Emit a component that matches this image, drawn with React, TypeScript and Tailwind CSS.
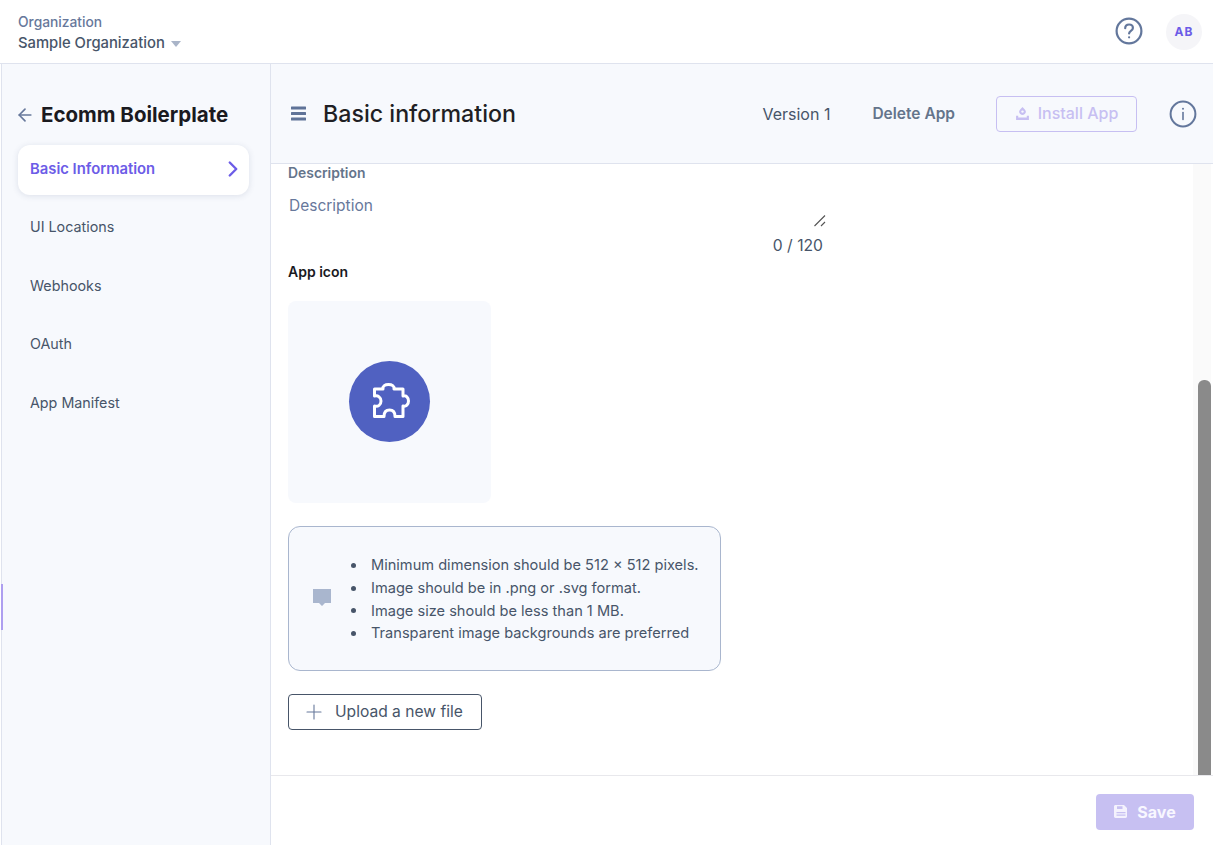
import { ArrowLeft, ChevronRight, Plus } from "lucide-react";

const navItems = ["UI Locations", "Webhooks", "OAuth", "App Manifest"];

const hints = [
  "Minimum dimension should be 512 × 512 pixels.",
  "Image should be in .png or .svg format.",
  "Image size should be less than 1 MB.",
  "Transparent image backgrounds are preferred",
];

const HelpIcon = () => (
  <svg width="28" height="28" viewBox="0 0 28 28" fill="none" stroke="#63779c" strokeWidth="2.2">
    <circle cx="14" cy="14" r="12.4" />
    <path d="M10.2 11.2c0-2.2 1.7-3.7 3.9-3.7 2.2 0 3.8 1.4 3.8 3.4 0 3-3.8 3-3.8 5.6" strokeLinecap="round" />
    <circle cx="14.1" cy="20.3" r="1.1" fill="#63779c" stroke="none" />
  </svg>
);

const InfoIcon = () => (
  <svg width="28" height="28" viewBox="0 0 28 28" fill="none" stroke="#63779c" strokeWidth="2">
    <circle cx="14" cy="14" r="12.4" />
    <path d="M14 12.5v7" strokeWidth="1.6" strokeLinecap="round" />
    <circle cx="14" cy="8.8" r="1" fill="#63779c" stroke="none" />
  </svg>
);

const InstallIcon = () => (
  <svg width="15" height="15" viewBox="0 0 14 14" fill="#c7bff2">
    <path d="M7 1 9.2 3.2a3 3 0 1 1-4.4 0z" />
    <circle cx="7" cy="5.2" r="1.1" fill="#f7f9fd" />
    <path d="M1 9h2v1.8h8V9h2v4H1z" />
  </svg>
);

const SaveIcon = () => (
  <svg width="14" height="15" viewBox="0 0 14 15" fill="#f4f2fd" fillRule="evenodd">
    <path d="M1.500 1H10l3 3v8.600c0 .8-.6 1.400-1.400 1.400H1.500C.7 14 0 13.400 0 12.600V2.400C0 1.600.7 1 1.500 1zM3 2.200V5h5.500V2.200zM2.500 8v1.200h9V8zm0 2.500v1.200h9v-1.200z" />
  </svg>
);

const CommentIcon = () => (
  <svg width="18" height="18" viewBox="0 0 18 18" fill="#a9b6ce">
    <path d="M0 0h18v14h-6l-3 3-3-3H0z" />
  </svg>
);

const MenuIcon = () => (
  <svg width="15" height="15" viewBox="0 0 15 15" fill="#5f7398">
    <rect x="0" y="0.500" width="15" height="3" rx="0.500" />
    <rect x="0" y="6" width="15" height="3" rx="0.500" />
    <rect x="0" y="11.500" width="15" height="3" rx="0.500" />
  </svg>
);

const PuzzleIcon = () => (
  <svg width="37" height="35" viewBox="0 0 37 35" fill="none" stroke="white" strokeWidth="3" strokeLinejoin="round">
    <path d="M1.500 6H10C9.500 3 12 1.500 15.500 1.500C19 1.500 21.500 3 21 6H30V13C33 12 35.500 14.500 35.500 18C35.500 21.500 33 24 30 23V33.500H22C22 29 19.500 27 16.500 27C13 27 11 29 11 33.500H1.500V23C5 24 8 22 8 18C8 14.500 5 12 1.500 13Z" />
  </svg>
);

export default function App() {
  return (
    <div className="h-[845px] w-[1213px] overflow-hidden bg-white font-['Inter',sans-serif]">
      <header className="flex h-16 items-center justify-between border-b border-[#dfe3ee] pl-[18px] pr-[11px]">
        <div className="pt-[3px]">
          <div className="text-[13.800px] font-medium leading-[20px] text-[#67789b]">Organization</div>
          <div className="flex items-center gap-[6px] text-[14.800px] font-medium leading-[22px] text-[#475569]">
            Sample Organization
            <span className="mt-[2px] h-0 w-0 border-x-[5px] border-t-[6px] border-x-transparent border-t-[#a9b4c8]" />
          </div>
        </div>
        <div className="flex items-center gap-[23px]">
          <div className="mb-[2px]">
            <HelpIcon />
          </div>
          <div className="flex h-9 w-9 items-center justify-center rounded-full bg-[#f5f5f8] text-[12px] font-bold tracking-[1px] text-[#6c5ce7]">
            AB
          </div>
        </div>
      </header>

      <div className="flex h-[781px]">
        <aside className="relative ml-[1px] w-[270px] shrink-0 border-x border-[#dfe3ee] bg-[#f7f9fd] pl-[16px] pr-[21px] pt-[37px]">
          <div className="absolute left-[-1px] top-[520px] h-[46px] w-[2px] bg-[#ae9ff0]" />
          <div className="flex h-7 items-center gap-[6px]">
            <ArrowLeft className="-ml-[3px]" size={20} color="#67789b" strokeWidth={2} />
            <h1 className="text-[20.500px] font-bold text-[#1a1a1f]">Ecomm Boilerplate</h1>
          </div>
          <div className="mt-[16px] flex h-[50px] items-center justify-between rounded-xl bg-white pb-[2px] pl-[12px] pr-[3px] shadow-[0_1px_6px_rgba(60,70,110,0.14)]">
            <span className="text-[14.800px] font-semibold text-[#6c5ce7]">Basic Information</span>
            <ChevronRight size={26} color="#6c5ce7" strokeWidth={2.200} />
          </div>
          <nav className="mt-[2.500px] flex flex-col">
            {navItems.map((item) => (
              <div key={item} className="flex h-[58.500px] items-center pl-[12px] text-[14.300px] text-[#475569]">
                {item}
              </div>
            ))}
          </nav>
        </aside>

        <main className="flex min-w-0 flex-1 flex-col">
          <div className="flex h-[100px] shrink-0 items-center border-b border-[#dfe3ee] bg-[#f7f9fd] pl-[20px] pr-[16px]">
            <MenuIcon />
            <h2 className="ml-[17px] pt-[2px] text-[23.200px] font-medium text-[#1f1f24]">Basic information</h2>
            <span className="ml-auto text-base text-[#475569]">Version 1</span>
            <span className="ml-[42px] text-[15.500px] font-semibold text-[#64748b]">Delete App</span>
            <div className="ml-[41px] flex h-9 w-[141px] items-center justify-center gap-[8px] rounded border border-[#c7bff2] pb-[1px] text-base font-medium text-[#c7bff2]">
              <InstallIcon />
              Install App
            </div>
            <div className="ml-[32px]">
              <InfoIcon />
            </div>
          </div>

          <div className="relative min-h-0 flex-1 overflow-hidden pl-[17px]">
            <div className="absolute bottom-0 right-[2px] top-0 w-[18px] bg-[#fafafa]" />
            <div className="absolute bottom-0 right-[2px] top-[216px] w-[13px] rounded-t-md bg-[#8a8a8a]" />

            <div className="text-[13.900px] font-semibold leading-[18px] text-[#64748b]">Description</div>
            <div className="relative h-[51px] w-[538px] pl-[1px] pt-[14px] text-[15.500px] leading-[20px] text-[#67789b]">
              Description
              <svg className="absolute bottom-[6px] right-[0px]" width="12" height="12" viewBox="0 0 12 12" stroke="#555" strokeWidth="1.100">
                <path d="M0.500 11 11 0.500M7 11 11 7" />
              </svg>
            </div>
            <div className="mt-[2px] w-[535px] text-right text-[15.700px] leading-[22px] text-[#475569]">0 / 120</div>
            <div className="mt-[6px] text-[14px] font-semibold leading-[18px] text-[#1a1a1f]">App icon</div>
            <div className="mt-[20px] flex h-[202px] w-[203px] items-center justify-center rounded-lg bg-[#f7f9fd]">
              <div className="mb-[2px] flex h-[81px] w-[81px] items-center justify-center rounded-full bg-[#5061c1]">
                <div className="mb-[2px] ml-[4px]">
                  <PuzzleIcon />
                </div>
              </div>
            </div>
            <div className="mt-[23px] flex h-[145px] w-[433px] items-center rounded-xl border border-[#a9b6ce] bg-[#f7f9fd] pl-[24px]">
              <div className="mb-[2px]">
                <CommentIcon />
              </div>
              <ul className="ml-[20px] mt-[2px] text-[14.600px] leading-[22.700px] text-[#475569]">
                {hints.map((hint) => (
                  <li key={hint} className="flex items-center gap-[15px]">
                    <span className="h-[5px] w-[5px] rounded-full bg-[#475569]" />
                    {hint}
                  </li>
                ))}
              </ul>
            </div>
            <div className="mt-[23px] flex h-9 w-[194px] items-center gap-[9px] rounded border border-[#475569] pl-[13px] text-[15.600px] text-[#475569]">
              <Plus size={24} color="#67789b" strokeWidth={1.100} />
              Upload a new file
            </div>
          </div>

          <div className="flex h-[70px] shrink-0 items-center justify-end border-t border-[#e8e8ec] pr-[19px] pt-[2px]">
            <div className="flex h-9 w-[98px] items-center justify-center gap-[9px] rounded bg-[#c7c0f2] text-base font-bold text-[#f8f7ff]">
              <SaveIcon />
              Save
            </div>
          </div>
        </main>
      </div>
    </div>
  );
}
